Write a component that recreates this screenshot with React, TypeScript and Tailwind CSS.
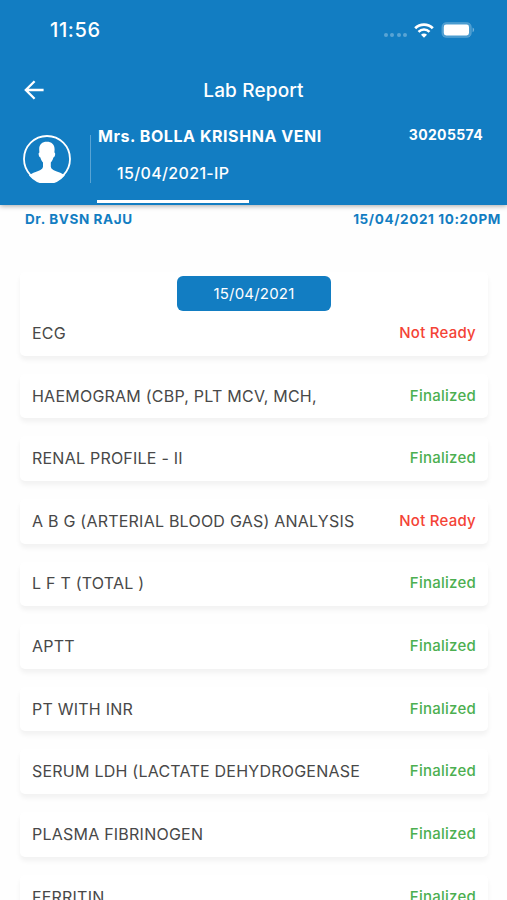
type LabTest = {
  name: string;
  status: "Finalized" | "Not Ready";
};

const DATE = "15/04/2021";

const tests: LabTest[] = [
  { name: "ECG", status: "Not Ready" },
  { name: "HAEMOGRAM (CBP, PLT MCV, MCH,", status: "Finalized" },
  { name: "RENAL PROFILE - II", status: "Finalized" },
  { name: "A B G (ARTERIAL BLOOD GAS) ANALYSIS", status: "Not Ready" },
  { name: "L F T (TOTAL )", status: "Finalized" },
  { name: "APTT", status: "Finalized" },
  { name: "PT WITH INR", status: "Finalized" },
  { name: "SERUM LDH (LACTATE DEHYDROGENASE", status: "Finalized" },
  { name: "PLASMA FIBRINOGEN", status: "Finalized" },
  { name: "FERRITIN", status: "Finalized" },
];

function StatusBar() {
  return (
    <div className="flex h-[60px] items-center justify-between pr-[32px] pl-[50px]">
      <span className="text-[20px] leading-6 font-medium tracking-[0.6px]">11:56</span>
      <div className="flex items-center">
        <div className="mt-[10px] mr-[7px] flex gap-[2.4px]">
          {[0, 1, 2, 3].map((dot) => (
            <span key={dot} className="size-1 rounded-full bg-white/30" />
          ))}
        </div>
        <svg width="20" height="15" viewBox="0 0 20 15" fill="none" className="mr-[7px]">
          <path d="M1.2 5.2a12.5 12.5 0 0 1 17.6 0" stroke="white" strokeWidth="2.8" />
          <path d="M4.5 8.8a7.8 7.8 0 0 1 11 0" stroke="white" strokeWidth="2.6" />
          <path d="M10 14.8 7 11.7a4.2 4.2 0 0 1 6 0Z" fill="white" />
        </svg>
        <svg width="34" height="16" viewBox="0 0 34 16">
          <rect x="0.8" y="0.5" width="29.6" height="15" rx="4.6" fill="white" fillOpacity="0.24" stroke="white" strokeOpacity="0.12" />
          <rect x="2.8" y="2.6" width="25.2" height="10.8" rx="2.4" fill="white" />
          <path d="M31.6 5.6c2 .8 2 3.8 0 4.6Z" fill="white" fillOpacity="0.4" />
        </svg>
      </div>
    </div>
  );
}

function Avatar() {
  return (
    <svg width="48" height="48" viewBox="0 0 48 48">
      <circle cx="24" cy="24" r="23" fill="none" stroke="white" strokeWidth="1.8" />
      <path
        d="M23.8 6.8c4.8 0 8 2.8 7.8 7.8l-.2 2.8c1.4.2.8 4.6-1 5.2-.5 2.2-1.4 3.6-2.6 5v4.2c.6 3 3.8 3.8 7.4 5.2 3 1.2 5.2 2 6.6 3.6A23 23 0 0 1 6 40.6c1.4-1.6 3.6-2.4 6.6-3.6 3.6-1.4 6.8-2.2 7.4-5.2v-4.2c-1.2-1.4-2.1-2.8-2.6-5-1.8-.6-2.4-5-1-5.2l-.2-2.8c-.2-5 2.8-7.8 7.6-7.8Z"
        fill="white"
      />
    </svg>
  );
}

function Header() {
  return (
    <header className="relative h-[205px] bg-[#127dc2] text-white shadow-[0_1px_5px_rgba(0,0,0,0.35)]">
      <StatusBar />
      <div className="grid h-[60px] grid-cols-[1fr_auto_1fr] items-center">
        <svg width="20" height="20" viewBox="0 0 20 20" fill="none" className="ml-[24px]">
          <path d="M19.6 10H2M10.6 1.2 1.8 10l8.8 8.8" stroke="white" strokeWidth="2.3" />
        </svg>
        <h1 className="pt-px text-[19px] leading-6 font-medium tracking-[0.15px]">Lab Report</h1>
      </div>
      <div className="flex h-[85px] pl-[23px]">
        <div className="mt-[15px]">
          <Avatar />
        </div>
        <div className="mt-[15px] ml-[19px] h-[48px] w-px bg-white/30" />
        <div className="ml-[6px] flex w-[152px] flex-col">
          <span className="mt-[6px] pl-px text-[16px] leading-5 font-bold tracking-[0.56px] whitespace-nowrap">
            Mrs. BOLLA KRISHNA VENI
          </span>
          <div className="mt-[15px] flex h-[42px] flex-col justify-between">
            <span className="pl-[20px] text-[16px] leading-6 font-medium tracking-[0.35px]">15/04/2021-IP</span>
            <div className="h-[3px] bg-white" />
          </div>
        </div>
        <span className="mt-[5px] mr-[24px] ml-auto text-[14px] leading-5 font-bold tracking-[0.35px]">
          30205574
        </span>
      </div>
    </header>
  );
}

function ResultCard({ test, date }: { test: LabTest; date?: string }) {
  return (
    <div className="rounded-[5px] bg-white px-[12px] shadow-[0_4px_5px_rgba(0,0,0,0.05)]">
      {date && (
        <div className="mx-auto mt-[4px] flex h-[35px] w-[154px] items-center justify-center rounded-[6px] bg-[#127dc2] pt-px text-[15px] tracking-[0.2px] text-white">
          {date}
        </div>
      )}
      <div className="flex h-[44.65px] items-center justify-between pb-[0.8px]">
        <span className="text-[16px] leading-6 tracking-[0.23px] text-[#484848]">{test.name}</span>
        <span
          className={`text-[15px] leading-6 font-medium tracking-[0.25px] ${
            test.status === "Finalized" ? "text-[#4caf50]" : "text-[#f44336]"
          }`}
        >
          {test.status}
        </span>
      </div>
    </div>
  );
}

export default function App() {
  return (
    <div className="h-[900px] w-full overflow-hidden bg-[#fefefe] font-['Inter',sans-serif]">
      <Header />
      <div className="flex h-[29px] items-center justify-between pr-[6px] pl-[25px] text-[13.5px] font-bold tracking-[0.62px] text-[#127dc2]">
        <span>Dr. BVSN RAJU</span>
        <span>15/04/2021 10:20PM</span>
      </div>
      <div className="mt-[38px] flex flex-col gap-[18px] pr-[19px] pl-[20px]">
        {tests.map((test, i) => (
          <ResultCard key={test.name} test={test} date={i === 0 ? DATE : undefined} />
        ))}
      </div>
    </div>
  );
}
